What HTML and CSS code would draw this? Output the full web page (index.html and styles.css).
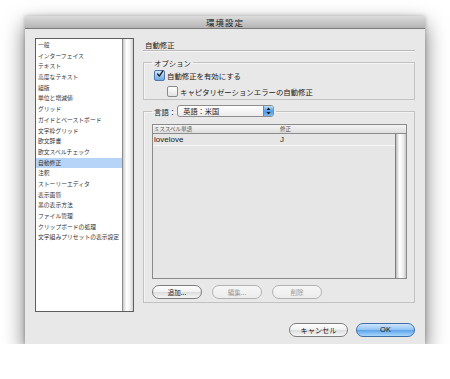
FILE: index.html
```html
<!DOCTYPE html>
<html>
<head>
    <meta charset="UTF-8">
    <title>環境設定</title>
    <link rel="stylesheet" href="styles.css">
</head>
<body>

    <div class="window">
        <div class="titlebar">環境設定</div>
        <div class="window-body">
            <div class="main">
                <div class="sidebar">
                    <ul class="nav">
                        <li>一般</li>
                        <li>インターフェイス</li>
                        <li>テキスト</li>
                        <li>高度なテキスト</li>
                        <li>組版</li>
                        <li>単位と増減値</li>
                        <li>グリッド</li>
                        <li>ガイドとペーストボード</li>
                        <li>文字枠グリッド</li>
                        <li>欧文辞書</li>
                        <li>欧文スペルチェック</li>
                        <li class="selected">自動修正</li>
                        <li>注釈</li>
                        <li>ストーリーエディタ</li>
                        <li>表示画質</li>
                        <li>黒の表示方法</li>
                        <li>ファイル管理</li>
                        <li>クリップボードの処理</li>
                        <li>文字組みプリセットの表示設定</li>
                    </ul>
                    <div class="sidebar-scroll"></div>
                </div>

                <div class="pane">
                    <div class="pane-title">自動修正</div>

                    <fieldset class="group options">
                        <legend>オプション</legend>
                        <div class="check-row">
                            <span class="checkbox checked">
                                <svg width="10" height="10" viewBox="0 0 10 10"><path d="M2 5 L4.2 7.6 L8.6 1.2" fill="none" stroke="#1d1d1d" stroke-width="1.7" stroke-linecap="round" stroke-linejoin="round"/></svg>
                            </span>
                            自動修正を有効にする
                        </div>
                        <div class="check-row indent">
                            <span class="checkbox"></span>
                            キャピタリゼーションエラーの自動修正
                        </div>
                    </fieldset>

                    <fieldset class="group language">
                        <legend>
                            <div class="lang-legend">
                                <span>言語：</span>
                                <div class="popup">
                                    英語：米国
                                    <span class="stepper">
                                        <svg width="5" height="8" viewBox="0 0 5 8"><path d="M2.5 0.5 L4.5 3 H0.5 Z M2.5 7.5 L4.5 5 H0.5 Z" fill="#1a1a1a"/></svg>
                                    </span>
                                </div>
                            </div>
                        </legend>

                        <div class="table">
                            <div class="thead">
                                <span class="col-word">ミススペル単語</span>
                                <span class="col-fix">修正</span>
                            </div>
                            <div class="tbody">
                                <div class="rows">
                                    <div class="row">
                                        <span class="col-word">lovelove</span>
                                        <span class="col-fix">J</span>
                                    </div>
                                </div>
                                <div class="vscroll"></div>
                            </div>
                        </div>

                        <div class="button-row">
                            <button class="btn small">追加...</button>
                            <button class="btn small" disabled>編集...</button>
                            <button class="btn small" disabled>削除</button>
                        </div>
                    </fieldset>
                </div>
            </div>

            <div class="footer">
                <button class="btn push">キャンセル</button>
                <button class="btn push default">OK</button>
            </div>
        </div>
    </div>

</body>
</html>
```

FILE: styles.css
```css
body {
    margin: 0;
    padding: 0;
    background: #ffffff;
    font-family: "Noto Sans CJK JP", "Liberation Sans", sans-serif;
    color: #1a1a1a;
}

.window {
    width: 400px;
    height: 328px;
    margin: 16px 0 0 25px;
    background: #e8e8e8;
    box-shadow: 0 9px 20px rgba(0, 0, 0, 0.55), 0 0 4px rgba(0, 0, 0, 0.25);
    display: flex;
    flex-direction: column;
}

.titlebar {
    height: 12px;
    line-height: 12px;
    text-align: center;
    font-size: 8.5px;
    letter-spacing: 1px;
    color: #222;
    background: linear-gradient(#dcdcdc, #b4b4b4);
    border-bottom: 1px solid #7a7a7a;
}

.window-body {
    flex: 1;
    padding: 9px 10px 0 10px;
    display: flex;
    flex-direction: column;
}

.main {
    display: flex;
    gap: 9px;
}

/* left list */
.sidebar {
    width: 97px;
    height: 272px;
    border: 1px solid #5e5e5e;
    background: #ffffff;
    display: flex;
}

.nav {
    list-style: none;
    margin: 0;
    padding: 1px 0 0 0;
    flex: 1;
    font-size: 5.8px;
    color: #333;
}

.nav li {
    height: 10.7px;
    line-height: 10.7px;
    padding-left: 2px;
    white-space: nowrap;
}

.nav li.selected {
    background: #b6d4f7;
}

.sidebar-scroll {
    width: 10px;
    border-left: 1px solid #8c8c8c;
    background: linear-gradient(90deg, #c9c9c9, #ffffff 35%, #f2f2f2 70%, #cfcfcf);
}

/* right pane */
.pane {
    width: 272px;
    display: flex;
    flex-direction: column;
}

.pane-title {
    height: 12px;
    line-height: 13px;
    font-size: 7.4px;
    padding-left: 2px;
    border-bottom: 1px solid #b9b9b9;
    box-shadow: 0 1px 0 #f6f6f6;
}

.group {
    margin: 0;
    min-width: 0;
    border: 1px solid #c2c2c2;
    box-shadow: inset 1px 1px 0 #f4f4f4;
    padding: 0 7px 0 8px;
}

.group legend {
    padding: 0 2px;
    font-size: 7.4px;
    line-height: 11px;
}

.options {
    margin-top: 6px;
    padding-bottom: 1px;
}

.check-row {
    height: 14px;
    display: flex;
    align-items: center;
    gap: 2px;
    font-size: 7.4px;
    padding-left: 2px;
}

.check-row + .check-row {
    margin-top: 2px;
}

.check-row.indent {
    padding-left: 15px;
}

.checkbox {
    width: 9px;
    height: 9px;
    border: 1px solid #8a8a8a;
    border-radius: 2px;
    background: linear-gradient(#ffffff, #e2e2e2);
    display: flex;
    align-items: center;
    justify-content: center;
}

.checkbox.checked {
    border-color: #4f78a8;
    background: linear-gradient(#d3e8fb, #6aa9e6);
}

.checkbox svg {
    margin-top: -2px;
    margin-left: 1px;
}

.language {
    margin-top: 5px;
    padding-bottom: 3px;
}

.lang-legend {
    display: flex;
    align-items: center;
    gap: 1px;
}

.popup {
    width: 90px;
    height: 10px;
    border: 1px solid #8d8d8d;
    border-radius: 3px;
    background: linear-gradient(#ffffff, #ececec);
    display: flex;
    align-items: center;
    justify-content: space-between;
    padding-left: 5px;
    font-size: 7.2px;
    line-height: 10px;
}

.stepper {
    width: 9px;
    height: 10px;
    border-radius: 0 2px 2px 0;
    background: linear-gradient(#b9dbfa, #4e9be6 55%, #7fb9ee);
    border-left: 1px solid #5e8bbd;
    display: flex;
    align-items: center;
    justify-content: center;
}

/* word table */
.table {
    margin-top: 7px;
    height: 153px;
    border: 1px solid #8a8a8a;
    display: flex;
    flex-direction: column;
    background: #e6e6e6;
}

.thead {
    height: 8px;
    line-height: 8px;
    display: flex;
    font-size: 5.5px;
    color: #555;
    background: linear-gradient(#f4f4f4, #dedede);
    border-bottom: 1px solid #8c8c8c;
}

.col-word {
    width: 126px;
    padding-left: 1px;
}

.tbody {
    flex: 1;
    display: flex;
}

.rows {
    flex: 1;
}

.row {
    height: 11px;
    line-height: 11px;
    display: flex;
    font-family: "Liberation Sans", sans-serif;
    font-size: 8px;
    border-bottom: 1px solid #f7f7f7;
}

.vscroll {
    width: 10px;
    border-left: 1px solid #7f7f7f;
    background: linear-gradient(90deg, #bdbdbd, #ffffff 35%, #efefef 70%, #c8c8c8);
}

/* buttons */
.button-row {
    display: flex;
    gap: 10px;
    margin-top: 6px;
}

.btn {
    font-family: "Noto Sans CJK JP", "Liberation Sans", sans-serif;
    padding: 0;
    cursor: pointer;
    outline: none;
    color: #1a1a1a;
    border: 1px solid #7c7c7c;
    border-radius: 8px;
    background: linear-gradient(#ffffff, #f0f0f0 50%, #dcdcdc 51%, #f6f6f6);
}

.btn.small {
    width: 50px;
    height: 14px;
    font-size: 6.5px;
    line-height: 12px;
}

.btn:disabled {
    color: #9a9a9a;
    border-color: #b2b2b2;
    background: linear-gradient(#f6f6f6, #ececec);
}

.footer {
    margin-top: 11px;
    display: flex;
    justify-content: flex-end;
    gap: 8px;
}

.btn.push {
    width: 59px;
    height: 14px;
    font-size: 7.2px;
    line-height: 12px;
}

.btn.default {
    border-color: #3e6ea5;
    background: linear-gradient(#cfe6fc, #8fc3f3 50%, #5aa3ea 51%, #a9d6fb);
    font-family: "Liberation Sans", sans-serif;
    font-size: 7.5px;
}
```
